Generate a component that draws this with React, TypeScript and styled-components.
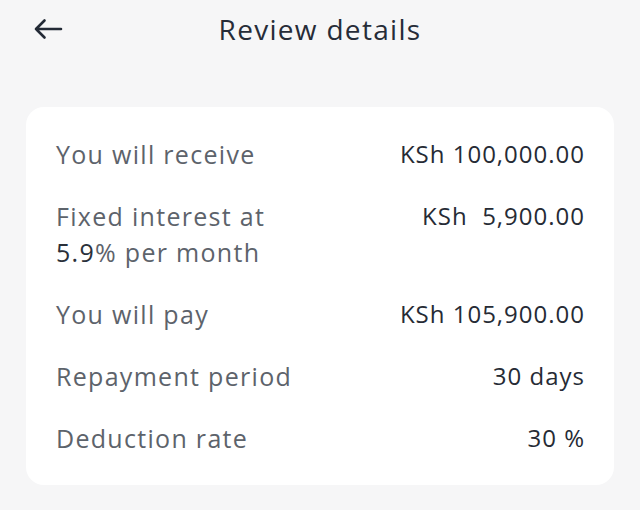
import React from 'react';
import styled, { createGlobalStyle } from 'styled-components';

const GlobalStyle = createGlobalStyle`
    html, body {
        margin: 0;
        padding: 0;
        background: #f6f6f7;
    }
    body {
        font-family: 'Open Sans', 'Liberation Sans', sans-serif;
    }
`;

const Page = styled.div`
    width: 640px;
    height: 510px;
    background: #f6f6f7;
    box-sizing: border-box;
    padding: 0 26px;
    overflow: hidden;
`;
const Header = styled.div`
    position: relative;
    height: 58px;
    display: flex;
    align-items: center;
    justify-content: center;
    margin-bottom: 49px;
`;
const BackButton = styled.button`
    position: absolute;
    left: 7px;
    top: 18px;
    border: none;
    background: none;
    padding: 0;
    display: flex;
    cursor: pointer;
`;
const Title = styled.h1`
    margin: 0;
    font-size: 28px;
    font-weight: 400;
    color: #262c38;
    letter-spacing: 1.3px;
`;
const Card = styled.div`
    background: #ffffff;
    border-radius: 18px;
    padding: 29px 29px 22px 30px;
    display: flex;
    flex-direction: column;
    gap: 26px;
    height: 378px;
    box-sizing: border-box;
`;
const Row = styled.div`
    display: flex;
    justify-content: space-between;
    align-items: flex-start;
`;
const Label = styled.div`
    font-size: 25px;
    line-height: 36px;
    color: #5d636b;
    letter-spacing: 1.3px;
`;
const Strong = styled.span`
    color: #2a303a;
    font-weight: 500;
`;
const Value = styled.div`
    font-size: 24px;
    line-height: 36px;
    color: #262b35;
    font-weight: 500;
    letter-spacing: 1px;
`;

interface DetailRow {
    label: React.ReactNode;
    value: React.ReactNode;
}

const rows: DetailRow[] = [
    { label: 'You will receive', value: 'KSh 100,000.00' },
    {
        label: (
            <>
                Fixed interest at
                <br />
                <Strong>5.9</Strong>% per month
            </>
        ),
        value: <>KSh&nbsp; 5,900.00</>,
    },
    { label: 'You will pay', value: 'KSh 105,900.00' },
    { label: 'Repayment period', value: '30 days' },
    { label: 'Deduction rate', value: '30 %' },
];

export default function App() {
    return (
        <>
            <GlobalStyle />
            <Page>
                <Header>
                    <BackButton aria-label='Back'>
                        <svg width='30' height='22' viewBox='0 0 30 22' fill='none'>
                            <path
                                d='M28 11H3M11.5 2.5L3 11l8.5 8.5'
                                stroke='#232a36'
                                strokeWidth='2.6'
                                strokeLinecap='round'
                                strokeLinejoin='round'
                            />
                        </svg>
                    </BackButton>
                    <Title>Review details</Title>
                </Header>
                <Card>
                    {rows.map((row, index) => (
                        <Row key={index}>
                            <Label>{row.label}</Label>
                            <Value>{row.value}</Value>
                        </Row>
                    ))}
                </Card>
            </Page>
        </>
    );
}
